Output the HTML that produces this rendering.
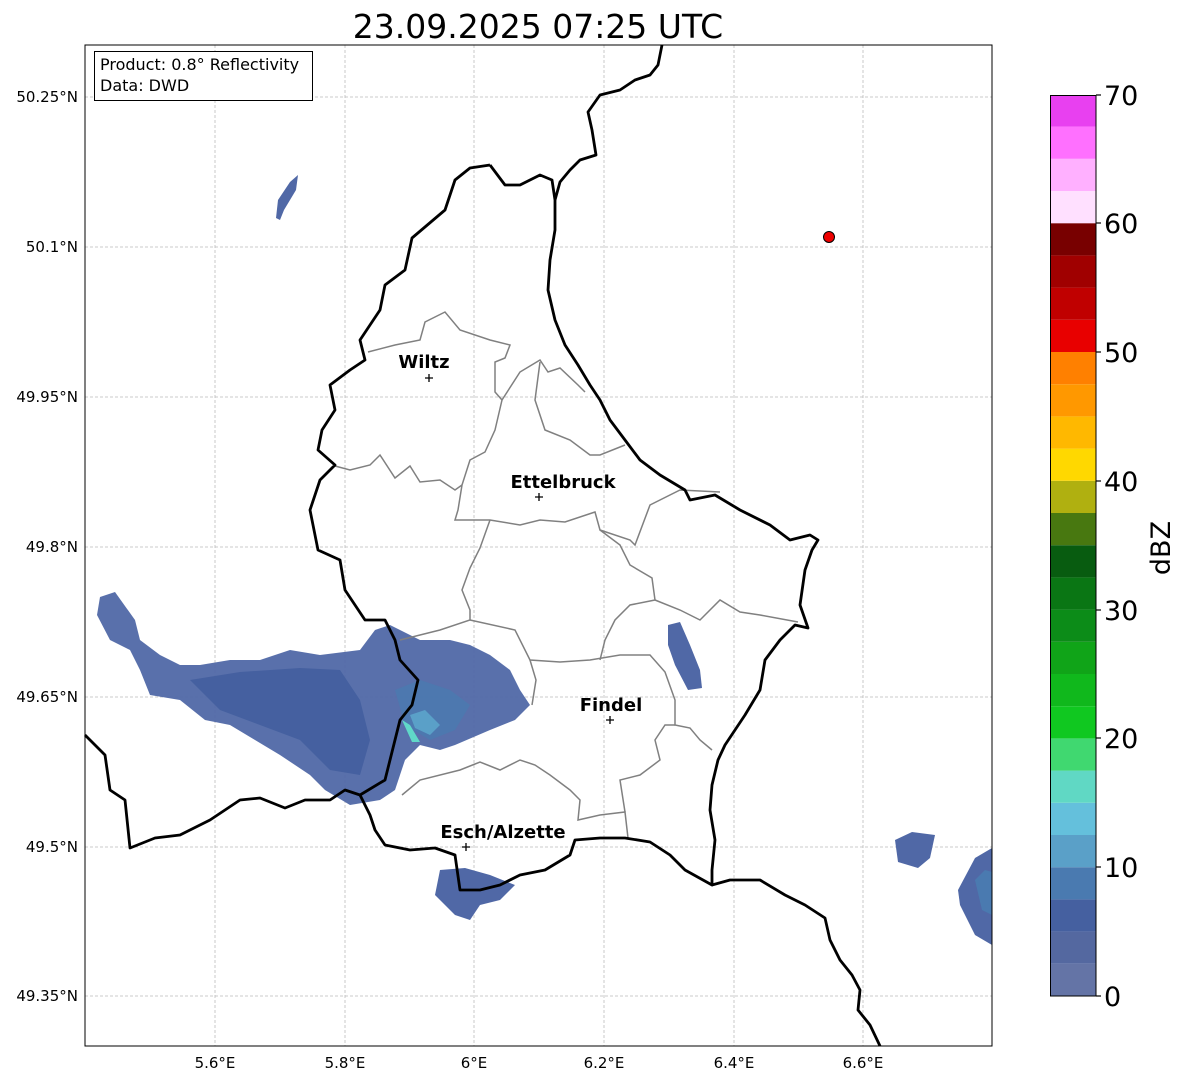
<!DOCTYPE html>
<html><head><meta charset="utf-8"><style>
body{margin:0;background:#fff;font-family:"Liberation Sans","DejaVu Sans",sans-serif;}
svg text{font-family:"DejaVu Sans","Liberation Sans",sans-serif;}
</style></head><body>
<svg width="1184" height="1081" viewBox="0 0 1184 1081" xmlns="http://www.w3.org/2000/svg">
<rect width="1184" height="1081" fill="#fff"/>
<text x="538" y="38" font-size="33" text-anchor="middle">23.09.2025 07:25 UTC</text>
<g stroke="#bbb" stroke-width="0.8" stroke-dasharray="3,2">
<line x1="215" y1="45" x2="215" y2="1046"/><line x1="345" y1="45" x2="345" y2="1046"/><line x1="474" y1="45" x2="474" y2="1046"/><line x1="604" y1="45" x2="604" y2="1046"/><line x1="734" y1="45" x2="734" y2="1046"/><line x1="863" y1="45" x2="863" y2="1046"/>
<line x1="85" y1="97" x2="992" y2="97"/><line x1="85" y1="247" x2="992" y2="247"/><line x1="85" y1="397" x2="992" y2="397"/><line x1="85" y1="547" x2="992" y2="547"/><line x1="85" y1="697" x2="992" y2="697"/><line x1="85" y1="847" x2="992" y2="847"/><line x1="85" y1="996" x2="992" y2="996"/>
</g>
<!-- radar -->
<g>
<polygon fill="#5068a6" opacity="0.95" points="100,597 115,592 135,620 140,640 160,655 180,665 200,665 230,660 260,660 290,650 320,655 360,650 375,630 390,625 420,640 450,640 470,645 490,655 510,670 520,690 530,705 515,720 490,730 455,745 440,750 420,745 405,760 400,775 395,790 380,800 350,805 325,790 310,775 280,755 255,740 230,725 205,720 180,700 150,695 140,670 130,650 110,640 97,615"/>
<polygon fill="#4560a0" points="190,680 240,672 300,668 340,670 360,700 370,740 360,775 330,770 300,740 260,725 220,710"/>
<polygon fill="#4a7ab0" opacity="0.8" points="395,690 420,680 450,690 470,705 455,730 430,740 405,725"/>
<polygon fill="#5aa0c8" points="410,715 425,710 440,725 430,735 415,728"/>
<polygon fill="#60d8c8" points="402,720 410,725 420,742 412,742"/>
<polygon fill="#5068a6" points="668,625 680,622 690,645 700,670 702,688 688,690 675,665 668,645"/>
<polygon fill="#5068a6" points="440,870 465,868 490,875 515,885 500,900 480,905 470,920 455,915 435,895"/>
<polygon fill="#5068a6" points="895,840 912,832 935,835 930,858 918,868 898,862"/>
<polygon fill="#5068a6" points="958,890 975,858 992,848 992,945 975,935 960,905"/>
<polygon fill="#4a7ab0" points="975,880 985,870 992,872 992,915 982,910"/>
<polygon fill="#5068a6" points="278,200 290,182 298,175 296,190 284,210 280,220 276,218"/>
</g>
<!-- canton lines -->
<g fill="none" stroke="#808080" stroke-width="1.5">
<polyline points="335,466 350,470 370,465 380,455 395,478 410,466 420,482 440,480 455,490 462,485"/>
<polyline points="368,352 395,345 420,340 425,322 445,312 460,330 490,340 510,345 505,358 495,362 495,392 502,400 495,430 485,452 470,460 462,485 458,510 455,520 490,520 520,525 540,520 565,522 595,512 600,530 630,540 635,545 650,505 680,490 720,492"/>
<polyline points="502,400 520,372 540,360 548,372 560,368 578,385 585,392"/>
<polyline points="540,362 535,400 545,430 570,440 590,455 600,455 625,445"/>
<polyline points="490,520 480,548 470,568 462,590 470,610 470,620 440,630 420,635 400,640"/>
<polyline points="470,620 515,630 530,660 560,662 590,660 620,655 650,655 665,672 675,700 675,725 690,728 700,740 712,750"/>
<polyline points="600,530 620,545 630,565 652,578 655,600 630,605 615,620 605,640 600,660"/>
<polyline points="655,600 680,610 700,620 720,600 740,612 760,615 798,622"/>
<polyline points="530,660 536,680 532,705"/>
<polyline points="402,795 420,780 460,770 480,762 500,770 520,760 535,765 550,775 570,790 580,800 578,820 600,815 625,812 628,838"/>
<polyline points="625,812 620,780 640,775 660,760 655,740 665,725 675,725"/>
</g>
<!-- borders -->
<g fill="none" stroke="#000" stroke-width="2.8" stroke-linejoin="round">
<polyline points="490,165 470,168 455,180 445,210 412,238 405,270 385,285 380,310 360,340 365,360 350,370 330,385 335,410 322,430 318,450 335,465 320,480 310,510 318,550 340,560 345,590 365,620 385,620 395,640 400,660 418,680 412,705 400,720 395,740 390,760 385,780 360,795 370,815 375,830 385,845 410,850 435,848 455,855 460,890 480,890 500,885 520,875 545,870 570,855 575,840 600,838 625,838 650,842 670,855 685,870 712,885 712,870 715,840 710,810 712,785 718,760 725,745 745,715 760,690 765,660 780,640 795,625 808,628 800,605 805,570 812,550 818,540 810,535 790,540 770,525 740,510 715,495 690,500 685,490 660,475 640,460 625,440 610,420 600,400 590,385 578,365 565,345 555,320 548,290 550,260 555,230 555,200 552,180 540,175 520,185 505,185 490,165"/>
<polyline points="555,200 560,182 570,170 580,160 596,155 592,130 588,112 600,95 620,90 635,80 650,75 658,65 662,45"/>
<polyline points="712,885 730,880 760,880 785,895 805,905 825,918 830,940 840,960 852,975 860,990 858,1010 870,1025 880,1046"/>
<polyline points="85,735 105,755 110,790 125,800 130,848 155,838 180,835 210,820 240,800 260,798 285,808 305,800 330,800 345,790 360,795"/>
</g>
<rect x="85" y="45" width="907" height="1001" fill="none" stroke="#000" stroke-width="1"/>
<!-- cities -->
<g font-size="18" font-weight="bold" text-anchor="middle">
<text x="424" y="368">Wiltz</text><text x="563" y="488">Ettelbruck</text><text x="611" y="711">Findel</text><text x="503" y="838">Esch/Alzette</text>
</g>
<g stroke="#000" stroke-width="1.3">
<path d="M425 378h8M429 374v8"/><path d="M535 497h8M539 493v8"/><path d="M606 720h8M610 716v8"/><path d="M462 847h8M466 843v8"/>
</g>
<circle cx="829" cy="237" r="5.5" fill="#e00" stroke="#000" stroke-width="1"/>
<rect x="94.5" y="51.5" width="218" height="49" fill="#fff" stroke="#000" stroke-width="1"/>
<text x="100" y="70" font-size="16">Product: 0.8° Reflectivity</text>
<text x="100" y="91" font-size="16">Data: DWD</text>
<!-- axis labels -->
<g font-size="15" text-anchor="end">
<text x="78" y="102">50.25°N</text><text x="78" y="252">50.1°N</text><text x="78" y="402">49.95°N</text><text x="78" y="552">49.8°N</text><text x="78" y="702">49.65°N</text><text x="78" y="852">49.5°N</text><text x="78" y="1001">49.35°N</text>
</g>
<g font-size="15" text-anchor="middle">
<text x="215" y="1068">5.6°E</text><text x="345" y="1068">5.8°E</text><text x="474" y="1068">6°E</text><text x="604" y="1068">6.2°E</text><text x="734" y="1068">6.4°E</text><text x="863" y="1068">6.6°E</text>
</g>
<!-- colorbar -->
<g>
<rect x="1050" y="963.8" width="46" height="32.2" fill="#6474a6"/>
<rect x="1050" y="931.6" width="46" height="32.2" fill="#5468a0"/>
<rect x="1050" y="899.4" width="46" height="32.2" fill="#4560a0"/>
<rect x="1050" y="867.2" width="46" height="32.2" fill="#4a7ab0"/>
<rect x="1050" y="835" width="46" height="32.2" fill="#5aa0c8"/>
<rect x="1050" y="802.8" width="46" height="32.2" fill="#64c0dc"/>
<rect x="1050" y="770.6" width="46" height="32.2" fill="#60d8c4"/>
<rect x="1050" y="738.4" width="46" height="32.2" fill="#40d870"/>
<rect x="1050" y="706.2" width="46" height="32.2" fill="#10c820"/>
<rect x="1050" y="674" width="46" height="32.2" fill="#10b81c"/>
<rect x="1050" y="641.8" width="46" height="32.2" fill="#10a418"/>
<rect x="1050" y="609.6" width="46" height="32.2" fill="#0c8c18"/>
<rect x="1050" y="577.4" width="46" height="32.2" fill="#0a7614"/>
<rect x="1050" y="545.2" width="46" height="32.2" fill="#085c10"/>
<rect x="1050" y="513" width="46" height="32.2" fill="#487810"/>
<rect x="1050" y="480.8" width="46" height="32.2" fill="#b0b010"/>
<rect x="1050" y="448.6" width="46" height="32.2" fill="#ffd800"/>
<rect x="1050" y="416.4" width="46" height="32.2" fill="#ffb800"/>
<rect x="1050" y="384.2" width="46" height="32.2" fill="#ff9800"/>
<rect x="1050" y="352" width="46" height="32.2" fill="#ff8000"/>
<rect x="1050" y="319.8" width="46" height="32.2" fill="#e80000"/>
<rect x="1050" y="287.6" width="46" height="32.2" fill="#c00000"/>
<rect x="1050" y="255.4" width="46" height="32.2" fill="#a00000"/>
<rect x="1050" y="223.2" width="46" height="32.2" fill="#780000"/>
<rect x="1050" y="191" width="46" height="32.2" fill="#ffe0ff"/>
<rect x="1050" y="158.8" width="46" height="32.2" fill="#ffb0ff"/>
<rect x="1050" y="126.6" width="46" height="32.2" fill="#ff70ff"/>
<rect x="1050" y="95" width="46" height="31.6" fill="#e840f0"/>
<rect x="1050.5" y="95.5" width="45.5" height="900.5" fill="none" stroke="#000" stroke-width="1"/>
<g stroke="#000" stroke-width="1.2">
<line x1="1096" y1="996" x2="1101" y2="996"/><line x1="1096" y1="867" x2="1101" y2="867"/><line x1="1096" y1="738" x2="1101" y2="738"/><line x1="1096" y1="610" x2="1101" y2="610"/><line x1="1096" y1="481" x2="1101" y2="481"/><line x1="1096" y1="352" x2="1101" y2="352"/><line x1="1096" y1="223" x2="1101" y2="223"/><line x1="1096" y1="95" x2="1101" y2="95"/>
</g>
<g font-size="27">
<text x="1104" y="1006">0</text><text x="1104" y="877">10</text><text x="1104" y="748">20</text><text x="1104" y="620">30</text><text x="1104" y="491">40</text><text x="1104" y="362">50</text><text x="1104" y="233">60</text><text x="1104" y="105">70</text>
</g>
<text transform="translate(1170,548) rotate(-90)" font-size="27" text-anchor="middle">dBZ</text>
</g>
</svg>
</body></html>
